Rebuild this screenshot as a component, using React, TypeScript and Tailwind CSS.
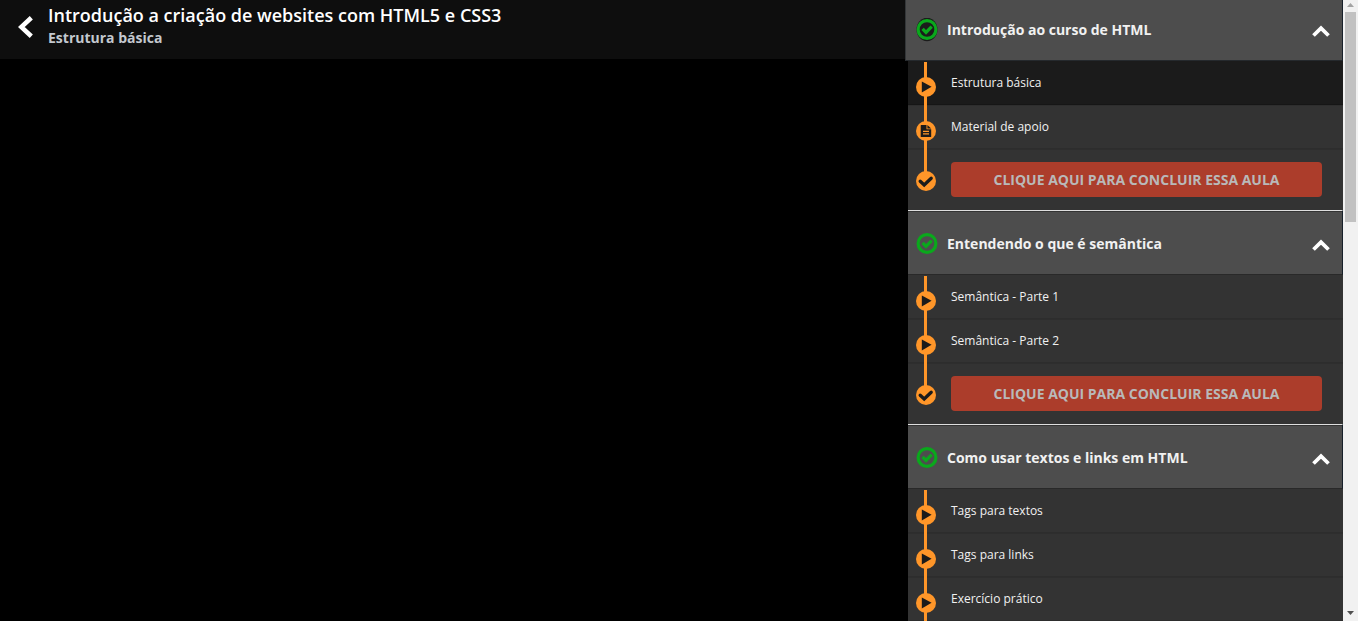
type Lesson = { title: string; kind: 'video' | 'file'; active?: boolean };
type Section = { title: string; lessons: Lesson[]; concludable: boolean };

const sections: Section[] = [
  {
    title: 'Introdução ao curso de HTML',
    concludable: true,
    lessons: [
      { title: 'Estrutura básica', kind: 'video', active: true },
      { title: 'Material de apoio', kind: 'file' },
    ],
  },
  {
    title: 'Entendendo o que é semântica',
    concludable: true,
    lessons: [
      { title: 'Semântica - Parte 1', kind: 'video' },
      { title: 'Semântica - Parte 2', kind: 'video' },
    ],
  },
  {
    title: 'Como usar textos e links em HTML',
    concludable: false,
    lessons: [
      { title: 'Tags para textos', kind: 'video' },
      { title: 'Tags para links', kind: 'video' },
      { title: 'Exercício prático', kind: 'video' },
    ],
  },
];

function DoneIcon({ dark }: { dark: boolean }) {
  return (
    <svg viewBox="0 0 22 24" className="h-6 w-[22px] shrink-0" aria-hidden="true">
      {dark && <ellipse cx="11" cy="11.500" rx="10.500" ry="11.800" fill="#1b1b1b" />}
      <circle cx="11" cy="11.500" r="8.900" fill="none" stroke="#0aa81c" strokeWidth="3.200" />
      <path d="M6.600 10.900l3.400 3.400 5.700-5.700" fill="none" stroke="#0aa81c" strokeWidth="3.300" />
    </svg>
  );
}

function StepIcon({ kind }: { kind: 'video' | 'file' | 'check' }) {
  return (
    <svg viewBox="0 0 20 20" className="relative size-5" aria-hidden="true">
      <circle cx="10" cy="10" r="10" fill="#ff9629" />
      {kind === 'video' && <path d="M5.800 4.500L15.600 9.800L5.800 15.400Z" fill="#1b1b1b" />}
      {kind === 'file' && (
        <>
          <path
            d="M5.300 4H10.500V8.200H15.200V15.500a.6.6 0 0 1-.6.6H5.300a.6.6 0 0 1-.6-.6V4.600a.6.6 0 0 1 .6-.6zM11.400 4L15.200 7.400H11.400z"
            fill="#1b1b1b"
          />
          <path d="M7 10.400h6M7 12.800h6" stroke="#ff9629" strokeWidth="1.200" />
        </>
      )}
      {kind === 'check' && (
        <path d="M4.200 10.200l4 3.800 7-6.800" fill="none" stroke="#1b1b1b" strokeWidth="3.300" strokeLinecap="round" />
      )}
    </svg>
  );
}

function Rail({ kind, first, last }: { kind: 'video' | 'file' | 'check'; first?: boolean; last?: boolean }) {
  return (
    <span className={`relative flex w-5 shrink-0 justify-center self-stretch ${last ? 'pt-[22px]' : 'pt-4'}`}>
      <span
        className={`absolute left-2 w-[3px] bg-[#ff9629] ${first ? 'top-px' : 'top-0'} ${last ? 'h-6' : '-bottom-px'}`}
      />
      <StepIcon kind={kind} />
    </span>
  );
}

function CourseSection({ section, first }: { section: Section; first: boolean }) {
  return (
    <section>
      <h2>
        <button
          type="button"
          aria-expanded="true"
          className={
            first
              ? '-ml-[3px] flex h-[61px] w-[438px] items-center border-r border-b border-l border-r-[#17202a] border-b-[#25292d] border-l-[#333638] bg-[#4d4d4d] pr-[11px] pl-[10px] text-left'
              : 'flex h-[65px] w-full items-center border-t border-r border-b border-t-[#dedede] border-r-[#17202a] border-b-[#292929] bg-[#4d4d4d] pt-[2px] pr-[11px] pl-2 text-left shadow-[inset_0_1px_0_#333]'
          }
        >
          <DoneIcon dark={first} />
          <span className="ml-[9px] flex-1 text-sm leading-5 font-bold text-[#f1f1f1]">{section.title}</span>
          <svg viewBox="0 0 20 14" className="mt-[2px] h-[14px] w-5" aria-hidden="true">
            <path d="M2.500 11.500L10 4.200 17.500 11.500" fill="none" stroke="#fff" strokeWidth="3.800" />
          </svg>
        </button>
      </h2>
      <ul>
        {section.lessons.map((lesson, i) => (
          <li key={lesson.title}>
            <a
              href="#"
              className={`flex h-11 border-b pl-2 ${lesson.active ? 'border-[#161616] bg-[#1b1b1b]' : 'border-[#2d2d2d] bg-[#333]'} ${i > 0 ? 'shadow-[inset_0_1px_0_#2e2e2e]' : ''}`}
            >
              <Rail kind={lesson.kind} first={i === 0} />
              <span className="ml-[15px] pt-3 text-xs leading-5 text-[#f1f1f1]">{lesson.title}</span>
            </a>
          </li>
        ))}
        {section.concludable && (
          <li className="flex h-[61px] bg-[#333] pr-[21px] pl-2 shadow-[inset_0_1px_0_#2e2e2e]">
            <Rail kind="check" last />
            <button
              type="button"
              className="mt-[13px] ml-[15px] h-[35px] flex-1 rounded bg-[#ac3d2b] text-sm font-bold text-[#b9b9b9]"
            >
              CLIQUE AQUI PARA CONCLUIR ESSA AULA
            </button>
          </li>
        )}
      </ul>
    </section>
  );
}

export default function App() {
  return (
    <div className="flex h-screen overflow-hidden bg-black font-['Open_Sans','Noto_Sans',sans-serif]">
      <main className="min-w-0 flex-1">
        <header className="flex h-[59px] bg-[#0e0e0e] pl-[18px]">
          <a href="#" aria-label="Voltar" className="pt-4">
            <svg viewBox="0 0 16 22" className="h-[22px] w-4" aria-hidden="true">
              <path d="M13.300 1.800L3.300 11l10 9.200" fill="none" stroke="#fff" strokeWidth="4.600" />
            </svg>
          </a>
          <div className="ml-[14px] flex flex-col gap-px pt-[3px]">
            <h1 className="text-lg leading-6 font-semibold text-white">
              Introdução a criação de websites com HTML5 e CSS3
            </h1>
            <p className="text-sm leading-5 font-bold text-[#c3c8cf]">Estrutura básica</p>
          </div>
        </header>
      </main>
      <aside className="relative w-[435px] shrink-0">
        {sections.map((section, i) => (
          <CourseSection key={section.title} section={section} first={i === 0} />
        ))}
      </aside>
      <div className="flex w-[15px] shrink-0 flex-col items-center bg-[#f1f1f1]" aria-hidden="true">
        <svg viewBox="0 0 15 12" className="h-3 w-[15px] shrink-0">
          <path d="M4 7L7.500 3L11 7Z" fill="#a3a3a3" />
        </svg>
        <div className="h-[210px] w-[11px] bg-[#c1c1c1]" />
        <svg viewBox="0 0 15 12" className="mt-auto h-3 w-[15px] shrink-0">
          <path d="M4 2L11 2L7.500 6Z" fill="#505050" />
        </svg>
      </div>
    </div>
  );
}
